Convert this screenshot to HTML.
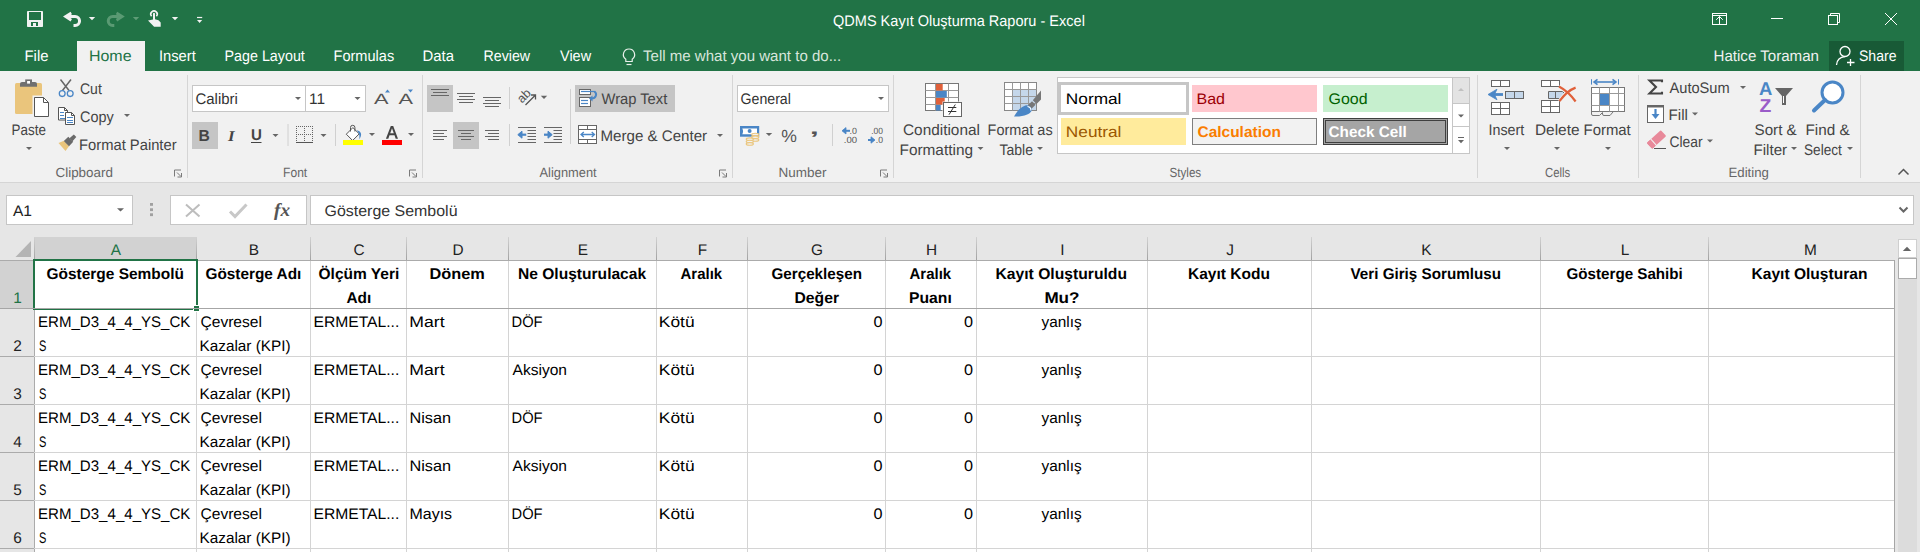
<!DOCTYPE html>
<html><head><meta charset="utf-8"><style>
html,body{margin:0;padding:0;background:#fff;overflow:hidden}
svg{display:block}
text{font-family:"Liberation Sans", sans-serif;text-rendering:geometricPrecision}
</style></head><body>
<svg width="1920" height="552" viewBox="0 0 1920 552" shape-rendering="auto">
<rect x="0" y="0" width="1920" height="71" fill="#217346"/>
<rect x="27" y="11" width="16" height="16" fill="#F2F2F2" rx="0.8"/>
<rect x="29" y="12" width="12" height="8" fill="#217346"/>
<rect x="31" y="22" width="7" height="4" fill="#217346"/>
<rect x="33" y="23" width="3" height="3" fill="#F2F2F2"/>
<path d="M66 16.6H75.1A4.4 4.4 0 0 1 75.1 25.5H73.5" fill="none" stroke="#F2F2F2" stroke-width="3"/>
<path d="M63 16.6L70.6 11.8L72 14.2L68.2 16.6L72 19L70.6 21.4Z" fill="#F2F2F2"/>
<path d="M88.8 17h6.4l-3.2 3.3z" fill="#F2F2F2"/>
<path d="M121.8 16.6H112.7A4.4 4.4 0 0 0 112.7 25.5H114.3" fill="none" stroke="#5A9A73" stroke-width="3"/>
<path d="M124.8 16.6L117.2 11.8L115.8 14.2L119.6 16.6L115.8 19L117.2 21.4Z" fill="#5A9A73"/>
<path d="M132.8 17h6.4l-3.2 3.3z" fill="#5E9C76"/>
<path d="M151.6 16.3A3.2 3.2 0 1 1 156.4 16.3" fill="none" stroke="#F2F2F2" stroke-width="1.6"/>
<path d="M148 20.6L153 19.6V13.8A1 1 0 0 1 155 13.8V19.2L158.5 20.2L160.7 22.6V26.7H154.1Z" fill="#F2F2F2"/>
<path d="M171.8 17h6.4l-3.2 3.3z" fill="#F2F2F2"/>
<rect x="197" y="16.9" width="5.2" height="1.2" fill="#F2F2F2"/>
<path d="M197.0 19.9h5.2l-2.6 3.1z" fill="#F2F2F2"/>
<text x="833.00" y="26.0" font-size="15.3" fill="#FFFFFF" textLength="251.88" lengthAdjust="spacingAndGlyphs">QDMS Kayıt Oluşturma Raporu - Excel</text>
<rect x="1712.5" y="13.5" width="14" height="11" fill="none" stroke="#fff" stroke-width="1"/>
<line x1="1712.5" y1="15.5" x2="1726.5" y2="15.5" stroke="#fff" stroke-width="1"/>
<path d="M1719.5 24V16.5M1716.2 19.8L1719.5 16.5L1722.8 19.8" fill="none" stroke="#fff" stroke-width="1"/>
<line x1="1771" y1="18.5" x2="1783" y2="18.5" stroke="#fff" stroke-width="1"/>
<rect x="1828.5" y="15.5" width="9" height="9" fill="none" stroke="#fff" stroke-width="1"/>
<path d="M1830.5 15.5v-2h9v9h-2" fill="none" stroke="#fff" stroke-width="1"/>
<path d="M1885 13l12 12M1897 13l-12 12" fill="none" stroke="#fff" stroke-width="1"/>
<rect x="77" y="41" width="68" height="30" fill="#F1F1F1"/>
<text x="24.53" y="61.0" font-size="15.3" fill="#FFFFFF" textLength="23.97" lengthAdjust="spacingAndGlyphs">File</text>
<text x="88.96" y="61.0" font-size="15.3" fill="#217346" textLength="42.57" lengthAdjust="spacingAndGlyphs">Home</text>
<text x="159.04" y="61.0" font-size="15.3" fill="#FFFFFF" textLength="36.74" lengthAdjust="spacingAndGlyphs">Insert</text>
<text x="224.57" y="61.0" font-size="15.3" fill="#FFFFFF" textLength="80.23" lengthAdjust="spacingAndGlyphs">Page Layout</text>
<text x="333.55" y="61.0" font-size="15.3" fill="#FFFFFF" textLength="60.62" lengthAdjust="spacingAndGlyphs">Formulas</text>
<text x="422.53" y="61.0" font-size="15.3" fill="#FFFFFF" textLength="31.49" lengthAdjust="spacingAndGlyphs">Data</text>
<text x="483.57" y="61.0" font-size="15.3" fill="#FFFFFF" textLength="46.54" lengthAdjust="spacingAndGlyphs">Review</text>
<text x="560.00" y="61.0" font-size="15.3" fill="#FFFFFF" textLength="31.10" lengthAdjust="spacingAndGlyphs">View</text>
<path d="M629 49a5.6 5.6 0 0 0-3.2 10.2v2.3h6.4v-2.3a5.6 5.6 0 0 0-3.2-10.2z" fill="none" stroke="#E8F0EA" stroke-width="1.2"/>
<line x1="626.5" y1="64.5" x2="631.5" y2="64.5" stroke="#E8F0EA" stroke-width="1.2"/>
<text x="643.00" y="61.0" font-size="15.3" fill="#D8E6DC" textLength="198.23" lengthAdjust="spacingAndGlyphs">Tell me what you want to do...</text>
<text x="1713.52" y="61.0" font-size="15.3" fill="#F0F0F0" textLength="105.48" lengthAdjust="spacingAndGlyphs">Hatice Toraman</text>
<rect x="1829" y="41" width="75" height="30" fill="#185A36"/>
<circle cx="1845" cy="51.5" r="5" fill="none" stroke="#fff" stroke-width="1.3"/>
<path d="M1836.5 65c0.5-5 3.5-8 8.5-8.3" fill="none" stroke="#fff" stroke-width="1.3"/>
<path d="M1850.5 59v7M1847 62.5h7.5" fill="none" stroke="#fff" stroke-width="1.3"/>
<text x="1859.00" y="61.0" font-size="15.3" fill="#FFFFFF" textLength="37.47" lengthAdjust="spacingAndGlyphs">Share</text>
<rect x="0" y="71" width="1920" height="111" fill="#F1F1F1"/>
<line x1="0" y1="182.5" x2="1920" y2="182.5" stroke="#D5D5D5" stroke-width="1"/>
<line x1="187.5" y1="75" x2="187.5" y2="178" stroke="#D5D5D5" stroke-width="1"/>
<line x1="422.5" y1="75" x2="422.5" y2="178" stroke="#D5D5D5" stroke-width="1"/>
<line x1="732.5" y1="75" x2="732.5" y2="178" stroke="#D5D5D5" stroke-width="1"/>
<line x1="893.5" y1="75" x2="893.5" y2="178" stroke="#D5D5D5" stroke-width="1"/>
<line x1="1477.5" y1="75" x2="1477.5" y2="178" stroke="#D5D5D5" stroke-width="1"/>
<line x1="1638.5" y1="75" x2="1638.5" y2="178" stroke="#D5D5D5" stroke-width="1"/>
<line x1="1860.5" y1="75" x2="1860.5" y2="178" stroke="#D5D5D5" stroke-width="1"/>
<text x="55.50" y="177.0" font-size="13.3" fill="#666666" textLength="57.40" lengthAdjust="spacingAndGlyphs">Clipboard</text>
<text x="283.09" y="177.0" font-size="13.3" fill="#666666" textLength="24.13" lengthAdjust="spacingAndGlyphs">Font</text>
<text x="539.50" y="177.0" font-size="13.3" fill="#666666" textLength="57.20" lengthAdjust="spacingAndGlyphs">Alignment</text>
<text x="778.49" y="177.0" font-size="13.3" fill="#666666" textLength="47.93" lengthAdjust="spacingAndGlyphs">Number</text>
<text x="1169.50" y="177.0" font-size="13.3" fill="#666666" textLength="31.69" lengthAdjust="spacingAndGlyphs">Styles</text>
<text x="1545.00" y="177.0" font-size="13.3" fill="#666666" textLength="25.20" lengthAdjust="spacingAndGlyphs">Cells</text>
<text x="1728.51" y="177.0" font-size="13.3" fill="#666666" textLength="40.39" lengthAdjust="spacingAndGlyphs">Editing</text>
<path d="M174.5 176.5v-6.5h6.5" fill="none" stroke="#7A7A7A" stroke-width="1"/>
<path d="M177 172.5l4 4M181.5 173.0v4h-4" fill="none" stroke="#7A7A7A" stroke-width="1"/>
<path d="M409.5 176.5v-6.5h6.5" fill="none" stroke="#7A7A7A" stroke-width="1"/>
<path d="M412 172.5l4 4M416.5 173.0v4h-4" fill="none" stroke="#7A7A7A" stroke-width="1"/>
<path d="M719.5 176.5v-6.5h6.5" fill="none" stroke="#7A7A7A" stroke-width="1"/>
<path d="M722 172.5l4 4M726.5 173.0v4h-4" fill="none" stroke="#7A7A7A" stroke-width="1"/>
<path d="M880.5 176.5v-6.5h6.5" fill="none" stroke="#7A7A7A" stroke-width="1"/>
<path d="M883 172.5l4 4M887.5 173.0v4h-4" fill="none" stroke="#7A7A7A" stroke-width="1"/>
<path d="M1898.5 174.5l5-5l5 5" fill="none" stroke="#555" stroke-width="1.5"/>
<rect x="15" y="83" width="27" height="31" fill="#EAC57C" rx="1.5"/>
<path d="M20 86.8V84a2 2 0 0 1 2-2H35a2 2 0 0 1 2 2V86.8Z" fill="#707070"/>
<rect x="25.2" y="79.4" width="6.8" height="3" fill="#707070"/>
<rect x="27.1" y="81" width="2.9" height="2.6" fill="#FFFFFF"/>
<path d="M33.5 96.5h10.5l5 5V116.5H33.5Z" fill="none" stroke="#F1F1F1" stroke-width="2"/>
<path d="M34.5 97.5h9l5 5v14h-14z" fill="#fff" stroke="#555" stroke-width="1"/>
<path d="M43.5 97.5v5h5" fill="none" stroke="#555" stroke-width="1"/>
<text x="11.62" y="134.8" font-size="15.3" fill="#444444" textLength="34.32" lengthAdjust="spacingAndGlyphs">Paste</text>
<path d="M26.0 147h6l-3.0 3z" fill="#666"/>
<path d="M60.5 79.5L69 90.5M71 79.5L62.5 90.5" fill="none" stroke="#666" stroke-width="1.5"/>
<circle cx="62.2" cy="93.6" r="2.9" fill="none" stroke="#4A86C6" stroke-width="1.3"/>
<circle cx="70.2" cy="93.6" r="2.9" fill="none" stroke="#4A86C6" stroke-width="1.3"/>
<text x="80.00" y="94.2" font-size="15.3" fill="#444444" textLength="21.81" lengthAdjust="spacingAndGlyphs">Cut</text>
<path d="M58.5 107.5h6l3 3v9.5h-9z" fill="#fff" stroke="#555" stroke-width="1"/>
<path d="M64.5 107.5v3h3" fill="none" stroke="#555" stroke-width="1"/>
<path d="M65.5 112.5h6l3 3v9h-9z" fill="#fff" stroke="#555" stroke-width="1"/>
<path d="M71.5 112.5v3h3" fill="none" stroke="#555" stroke-width="1"/>
<line x1="60" y1="112.5" x2="64" y2="112.5" stroke="#4A86C6" stroke-width="1"/>
<line x1="60" y1="115.5" x2="64" y2="115.5" stroke="#4A86C6" stroke-width="1"/>
<line x1="60" y1="118.5" x2="65" y2="118.5" stroke="#4A86C6" stroke-width="1"/>
<line x1="67" y1="117.5" x2="73" y2="117.5" stroke="#4A86C6" stroke-width="1"/>
<line x1="67" y1="120.5" x2="73" y2="120.5" stroke="#4A86C6" stroke-width="1"/>
<line x1="67" y1="122.5" x2="73" y2="122.5" stroke="#4A86C6" stroke-width="1"/>
<text x="80.00" y="121.5" font-size="15.3" fill="#444444" textLength="33.67" lengthAdjust="spacingAndGlyphs">Copy</text>
<path d="M124.0 114h6l-3.0 3z" fill="#666"/>
<path d="M58.5 143L64 140.8L69.2 146L65.5 151Z" fill="#EAC57C"/>
<path d="M63.8 141L68.3 136.8L73.2 141.7L69 146.2Z" fill="#6A6A6A"/>
<path d="M69.5 138.2L73.8 134.5L76.3 137L72.5 141.2Z" fill="#6A6A6A"/>
<text x="79.04" y="150.2" font-size="15.3" fill="#444444" textLength="97.55" lengthAdjust="spacingAndGlyphs">Format Painter</text>
<rect x="192.5" y="85.5" width="113" height="26" fill="#fff" stroke="#C6C6C6" stroke-width="1"/>
<rect x="305.5" y="85.5" width="60" height="26" fill="#fff" stroke="#C6C6C6" stroke-width="1"/>
<text x="195.50" y="104.0" font-size="15.3" fill="#333" textLength="42.39" lengthAdjust="spacingAndGlyphs">Calibri</text>
<path d="M295.0 97h6l-3.0 3z" fill="#666"/>
<text x="308.99" y="104.0" font-size="15.3" fill="#333" textLength="16.02" lengthAdjust="spacingAndGlyphs">11</text>
<path d="M354.5 97h6l-3.0 3z" fill="#666"/>
<text x="374.00" y="104.0" font-size="15" fill="#555" textLength="14.51" lengthAdjust="spacingAndGlyphs">A</text>
<path d="M385 92.5l2.5-3l2.5 3z" fill="#4A86C6"/>
<text x="398.50" y="104.0" font-size="15" fill="#555" textLength="14.51" lengthAdjust="spacingAndGlyphs">A</text>
<path d="M408 89.5l2.5 3l2.5-3z" fill="#4A86C6"/>
<rect x="192" y="122" width="26" height="27" fill="#C5C5C5"/>
<text x="198.52" y="140.5" font-size="16" fill="#444" font-weight="bold" textLength="11.32" lengthAdjust="spacingAndGlyphs">B</text>
<text x="228.12" y="140.8" font-size="15" fill="#444" font-weight="bold" style="font-family:'Liberation Serif';font-style:italic" textLength="6.57" lengthAdjust="spacingAndGlyphs">I</text>
<text x="251.00" y="140.3" font-size="15.5" fill="#444" font-weight="bold" textLength="10.89" lengthAdjust="spacingAndGlyphs">U</text>
<line x1="251" y1="142.5" x2="261.5" y2="142.5" stroke="#444" stroke-width="1"/>
<path d="M272.5 134h6l-3.0 3z" fill="#666"/>
<line x1="288" y1="124" x2="288" y2="146" stroke="#D0D0D0" stroke-width="1"/>
<rect x="296" y="126" width="1" height="1" fill="#666"/>
<rect x="296" y="134" width="1" height="1" fill="#666"/>
<rect x="298" y="126" width="1" height="1" fill="#666"/>
<rect x="298" y="134" width="1" height="1" fill="#666"/>
<rect x="300" y="126" width="1" height="1" fill="#666"/>
<rect x="300" y="134" width="1" height="1" fill="#666"/>
<rect x="302" y="126" width="1" height="1" fill="#666"/>
<rect x="302" y="134" width="1" height="1" fill="#666"/>
<rect x="304" y="126" width="1" height="1" fill="#666"/>
<rect x="304" y="134" width="1" height="1" fill="#666"/>
<rect x="306" y="126" width="1" height="1" fill="#666"/>
<rect x="306" y="134" width="1" height="1" fill="#666"/>
<rect x="308" y="126" width="1" height="1" fill="#666"/>
<rect x="308" y="134" width="1" height="1" fill="#666"/>
<rect x="310" y="126" width="1" height="1" fill="#666"/>
<rect x="310" y="134" width="1" height="1" fill="#666"/>
<rect x="312" y="126" width="1" height="1" fill="#666"/>
<rect x="312" y="134" width="1" height="1" fill="#666"/>
<rect x="296" y="126" width="1" height="1" fill="#666"/>
<rect x="304" y="126" width="1" height="1" fill="#666"/>
<rect x="312" y="126" width="1" height="1" fill="#666"/>
<rect x="296" y="128" width="1" height="1" fill="#666"/>
<rect x="304" y="128" width="1" height="1" fill="#666"/>
<rect x="312" y="128" width="1" height="1" fill="#666"/>
<rect x="296" y="130" width="1" height="1" fill="#666"/>
<rect x="304" y="130" width="1" height="1" fill="#666"/>
<rect x="312" y="130" width="1" height="1" fill="#666"/>
<rect x="296" y="132" width="1" height="1" fill="#666"/>
<rect x="304" y="132" width="1" height="1" fill="#666"/>
<rect x="312" y="132" width="1" height="1" fill="#666"/>
<rect x="296" y="134" width="1" height="1" fill="#666"/>
<rect x="304" y="134" width="1" height="1" fill="#666"/>
<rect x="312" y="134" width="1" height="1" fill="#666"/>
<rect x="296" y="136" width="1" height="1" fill="#666"/>
<rect x="304" y="136" width="1" height="1" fill="#666"/>
<rect x="312" y="136" width="1" height="1" fill="#666"/>
<rect x="296" y="138" width="1" height="1" fill="#666"/>
<rect x="304" y="138" width="1" height="1" fill="#666"/>
<rect x="312" y="138" width="1" height="1" fill="#666"/>
<rect x="296" y="140" width="1" height="1" fill="#666"/>
<rect x="304" y="140" width="1" height="1" fill="#666"/>
<rect x="312" y="140" width="1" height="1" fill="#666"/>
<line x1="296" y1="142.5" x2="313" y2="142.5" stroke="#555" stroke-width="1"/>
<path d="M320.5 134h6l-3.0 3z" fill="#666"/>
<line x1="335.5" y1="124" x2="335.5" y2="146" stroke="#D0D0D0" stroke-width="1"/>
<path d="M346.3 134.2L352.9 127.6L359.2 133.9L352.6 140.5Z" fill="#fff" stroke="#555" stroke-width="1"/>
<path d="M350.5 131.5V127.5A2.2 2.2 0 0 1 354.9 127.5V131.5" fill="none" stroke="#555" stroke-width="1"/>
<path d="M356.8 130.2C361 131 362.8 134.5 359.3 139.3C359.6 136 359.5 133.5 357.8 131.8Z" fill="#4A86C6"/>
<rect x="343" y="140" width="20" height="5" fill="#FFFF00"/>
<path d="M369.0 133h6l-3.0 3z" fill="#666"/>
<path d="M385.9 138.75L390.8 126H393.2L398 138.75H395.7L394.5 135.3H389.5L388.3 138.75ZM390.2 133.3H393.8L392 128.3Z" fill="#444" fill-rule="evenodd"/>
<rect x="382" y="140" width="20" height="5" fill="#FF0000"/>
<path d="M408.0 133h6l-3.0 3z" fill="#666"/>
<rect x="427" y="85" width="26" height="27" fill="#C5C5C5"/>
<line x1="431" y1="89.5" x2="449" y2="89.5" stroke="#666" stroke-width="1"/>
<line x1="433" y1="92.5" x2="447" y2="92.5" stroke="#666" stroke-width="1"/>
<line x1="431" y1="95.5" x2="449" y2="95.5" stroke="#666" stroke-width="1"/>
<line x1="457" y1="93.5" x2="475" y2="93.5" stroke="#666" stroke-width="1"/>
<line x1="459" y1="96.5" x2="473" y2="96.5" stroke="#666" stroke-width="1"/>
<line x1="457" y1="99.5" x2="475" y2="99.5" stroke="#666" stroke-width="1"/>
<line x1="459" y1="102.5" x2="473" y2="102.5" stroke="#666" stroke-width="1"/>
<line x1="483" y1="97.5" x2="501" y2="97.5" stroke="#666" stroke-width="1"/>
<line x1="485" y1="100.5" x2="499" y2="100.5" stroke="#666" stroke-width="1"/>
<line x1="483" y1="103.5" x2="501" y2="103.5" stroke="#666" stroke-width="1"/>
<line x1="485" y1="106.5" x2="499" y2="106.5" stroke="#666" stroke-width="1"/>
<line x1="509.5" y1="87" x2="509.5" y2="109" stroke="#D0D0D0" stroke-width="1"/>
<text x="517.00" y="100.0" font-size="12.5" fill="#555" textLength="13.95" lengthAdjust="spacingAndGlyphs" transform="rotate(-45 524 96)">ab</text>
<path d="M525.5 105L535.5 95M531 95H535.5V99.5" fill="none" stroke="#555" stroke-width="1.3"/>
<path d="M540.8 95.8h6.4l-3.2 3.2z" fill="#666"/>
<line x1="570.5" y1="89" x2="570.5" y2="144" stroke="#D0D0D0" stroke-width="1"/>
<rect x="575" y="85" width="100" height="27" fill="#C5C5C5"/>
<rect x="579.5" y="89.5" width="11" height="5" fill="#fff" stroke="#666" stroke-width="1"/>
<rect x="579.5" y="97.5" width="11" height="9" fill="#fff" stroke="#666" stroke-width="1"/>
<line x1="581" y1="91.5" x2="595" y2="91.5" stroke="#4A86C6" stroke-width="1.2"/>
<line x1="581" y1="100.5" x2="588" y2="100.5" stroke="#4A86C6" stroke-width="1.2"/>
<line x1="581" y1="103.5" x2="588" y2="103.5" stroke="#4A86C6" stroke-width="1.2"/>
<path d="M594.5 91.5C597.5 94 596 98.5 591.5 98.5" fill="none" stroke="#4A86C6" stroke-width="2"/>
<path d="M589 98.5L592.5 95.5V101.5Z" fill="#4A86C6"/>
<text x="601.50" y="104.0" font-size="15.3" fill="#444444" textLength="65.78" lengthAdjust="spacingAndGlyphs">Wrap Text</text>
<line x1="433" y1="130.5" x2="447" y2="130.5" stroke="#666" stroke-width="1"/>
<line x1="433" y1="133.5" x2="444" y2="133.5" stroke="#666" stroke-width="1"/>
<line x1="433" y1="136.5" x2="447" y2="136.5" stroke="#666" stroke-width="1"/>
<line x1="433" y1="139.5" x2="444" y2="139.5" stroke="#666" stroke-width="1"/>
<rect x="453" y="122" width="26" height="27" fill="#C5C5C5"/>
<line x1="458" y1="130.5" x2="474" y2="130.5" stroke="#666" stroke-width="1"/>
<line x1="461" y1="133.5" x2="471" y2="133.5" stroke="#666" stroke-width="1"/>
<line x1="458" y1="136.5" x2="474" y2="136.5" stroke="#666" stroke-width="1"/>
<line x1="461" y1="139.5" x2="471" y2="139.5" stroke="#666" stroke-width="1"/>
<line x1="485" y1="130.5" x2="499" y2="130.5" stroke="#666" stroke-width="1"/>
<line x1="488" y1="133.5" x2="499" y2="133.5" stroke="#666" stroke-width="1"/>
<line x1="485" y1="136.5" x2="499" y2="136.5" stroke="#666" stroke-width="1"/>
<line x1="488" y1="139.5" x2="499" y2="139.5" stroke="#666" stroke-width="1"/>
<line x1="509.5" y1="124" x2="509.5" y2="146" stroke="#D0D0D0" stroke-width="1"/>
<line x1="518" y1="127.5" x2="536" y2="127.5" stroke="#666" stroke-width="1"/>
<line x1="527.5" y1="130.5" x2="536" y2="130.5" stroke="#666" stroke-width="1"/>
<line x1="527.5" y1="133.5" x2="536" y2="133.5" stroke="#666" stroke-width="1"/>
<line x1="527.5" y1="136.5" x2="536" y2="136.5" stroke="#666" stroke-width="1"/>
<line x1="527.5" y1="139.5" x2="536" y2="139.5" stroke="#666" stroke-width="1"/>
<line x1="518" y1="142.5" x2="536" y2="142.5" stroke="#666" stroke-width="1"/>
<path d="M519 134.7H526.2" fill="none" stroke="#4A86C6" stroke-width="2.2"/>
<path d="M517.8 134.7L522 131.2V138.2Z" fill="#4A86C6" stroke="#4A86C6" stroke-width="1"/>
<line x1="544" y1="127.5" x2="562" y2="127.5" stroke="#666" stroke-width="1"/>
<line x1="553.5" y1="130.5" x2="562" y2="130.5" stroke="#666" stroke-width="1"/>
<line x1="553.5" y1="133.5" x2="562" y2="133.5" stroke="#666" stroke-width="1"/>
<line x1="553.5" y1="136.5" x2="562" y2="136.5" stroke="#666" stroke-width="1"/>
<line x1="553.5" y1="139.5" x2="562" y2="139.5" stroke="#666" stroke-width="1"/>
<line x1="544" y1="142.5" x2="562" y2="142.5" stroke="#666" stroke-width="1"/>
<path d="M544 134.7H551" fill="none" stroke="#4A86C6" stroke-width="2.2"/>
<path d="M552.2 134.7L548 131.2V138.2Z" fill="#4A86C6" stroke="#4A86C6" stroke-width="1"/>
<rect x="578.5" y="125.5" width="18" height="18" fill="#fff" stroke="#666" stroke-width="1"/>
<line x1="578.5" y1="129.5" x2="596.5" y2="129.5" stroke="#666" stroke-width="1"/>
<line x1="578.5" y1="139.5" x2="596.5" y2="139.5" stroke="#666" stroke-width="1"/>
<line x1="587.5" y1="125.5" x2="587.5" y2="129.5" stroke="#666" stroke-width="1"/>
<line x1="587.5" y1="139.5" x2="587.5" y2="143.5" stroke="#666" stroke-width="1"/>
<path d="M581 134.5H594.5M583.8 132L581 134.5L583.8 137M591.7 132L594.5 134.5L591.7 137" fill="none" stroke="#4A86C6" stroke-width="1.3"/>
<text x="600.51" y="141.0" font-size="15.3" fill="#444444" textLength="106.58" lengthAdjust="spacingAndGlyphs">Merge &amp; Center</text>
<path d="M717.0 134h6l-3.0 3z" fill="#666"/>
<rect x="737.5" y="85.5" width="151" height="26" fill="#fff" stroke="#C6C6C6" stroke-width="1"/>
<text x="740.50" y="104.0" font-size="15.3" fill="#333" textLength="50.37" lengthAdjust="spacingAndGlyphs">General</text>
<path d="M878.0 97h6l-3.0 3z" fill="#666"/>
<rect x="740" y="126" width="19.2" height="10.7" fill="#4A86C6"/>
<path d="M742.3 128.6H757V134.3H742.3C743.3 132.5 743.3 130.4 742.3 128.6Z" fill="#fff"/>
<circle cx="749.6" cy="131" r="2" fill="#4A86C6"/>
<ellipse cx="755.2" cy="134.5" rx="3.6" ry="1.3" fill="#F1F1F1" stroke="#EAC57C" stroke-width="1.1"/>
<ellipse cx="755.2" cy="137.2" rx="3.6" ry="1.3" fill="#F1F1F1" stroke="#EAC57C" stroke-width="1.1"/>
<ellipse cx="755.2" cy="139.9" rx="3.6" ry="1.3" fill="#F1F1F1" stroke="#EAC57C" stroke-width="1.1"/>
<ellipse cx="749.8" cy="139.2" rx="3.6" ry="1.3" fill="#F1F1F1" stroke="#EAC57C" stroke-width="1.1"/>
<ellipse cx="749.8" cy="141.6" rx="3.6" ry="1.3" fill="#F1F1F1" stroke="#EAC57C" stroke-width="1.1"/>
<ellipse cx="749.8" cy="143.9" rx="3.6" ry="1.3" fill="#F1F1F1" stroke="#EAC57C" stroke-width="1.1"/>
<path d="M765.8 133h6.4l-3.2 3z" fill="#666"/>
<text x="781.20" y="142.0" font-size="17.5" fill="#555" textLength="15.66" lengthAdjust="spacingAndGlyphs">%</text>
<text x="809.77" y="133.5" font-size="17" fill="#555" font-weight="bold" textLength="9.13" lengthAdjust="spacingAndGlyphs">,</text>
<line x1="832.5" y1="124" x2="832.5" y2="146" stroke="#D0D0D0" stroke-width="1"/>
<path d="M843.5 130.8H850" fill="none" stroke="#4A86C6" stroke-width="2"/>
<path d="M842 130.8L846 127.6V134Z" fill="#4A86C6" stroke="#4A86C6" stroke-width="0.8"/>
<text x="849.60" y="133.8" font-size="9" fill="#555" textLength="7.41" lengthAdjust="spacingAndGlyphs">.0</text>
<text x="843.75" y="142.5" font-size="9" fill="#555" textLength="13.26" lengthAdjust="spacingAndGlyphs">.00</text>
<text x="871.25" y="133.8" font-size="9" fill="#555" textLength="11.76" lengthAdjust="spacingAndGlyphs">.00</text>
<path d="M868 140H873.5" fill="none" stroke="#4A86C6" stroke-width="2"/>
<path d="M875 140L871 136.8V143.2Z" fill="#4A86C6" stroke="#4A86C6" stroke-width="0.8"/>
<text x="875.80" y="142.5" font-size="9" fill="#555" textLength="7.21" lengthAdjust="spacingAndGlyphs">.0</text>
<rect x="925.5" y="83.5" width="33" height="27" fill="#fff" stroke="#777" stroke-width="1"/>
<line x1="935.5" y1="83.5" x2="935.5" y2="110.5" stroke="#999" stroke-width="1"/>
<line x1="948.5" y1="83.5" x2="948.5" y2="110.5" stroke="#999" stroke-width="1"/>
<line x1="925.5" y1="90.5" x2="958.5" y2="90.5" stroke="#999" stroke-width="1"/>
<line x1="925.5" y1="97.5" x2="958.5" y2="97.5" stroke="#999" stroke-width="1"/>
<line x1="925.5" y1="104.5" x2="958.5" y2="104.5" stroke="#999" stroke-width="1"/>
<rect x="936" y="84" width="6.7" height="6.5" fill="#E0603A"/>
<rect x="936" y="91" width="10.8" height="6.5" fill="#4A86C6"/>
<rect x="936" y="98" width="8.7" height="6.5" fill="#E0603A"/>
<rect x="936" y="105" width="4.7" height="5.5" fill="#4A86C6"/>
<rect x="942.5" y="101.5" width="20" height="16" fill="#F1F1F1"/>
<rect x="943.5" y="102.5" width="18" height="14" fill="#fff" stroke="#666" stroke-width="1"/>
<path d="M948 107.5H956.3M948 111.5H956.3M955.3 104.5L949 114.7" fill="none" stroke="#333" stroke-width="1"/>
<text x="903.00" y="134.8" font-size="15.3" fill="#444444" textLength="76.90" lengthAdjust="spacingAndGlyphs">Conditional</text>
<text x="899.49" y="155.0" font-size="15.3" fill="#444444" textLength="73.52" lengthAdjust="spacingAndGlyphs">Formatting</text>
<path d="M977.5 147h6l-3.0 3z" fill="#666"/>
<rect x="1004.5" y="82.5" width="32" height="28" fill="#fff" stroke="#888" stroke-width="1"/>
<rect x="1012" y="90" width="24" height="20" fill="#C5D7EA"/>
<line x1="1012.5" y1="82.5" x2="1012.5" y2="110.5" stroke="#999" stroke-width="1"/>
<line x1="1020.5" y1="82.5" x2="1020.5" y2="110.5" stroke="#999" stroke-width="1"/>
<line x1="1028.5" y1="82.5" x2="1028.5" y2="110.5" stroke="#999" stroke-width="1"/>
<line x1="1004.5" y1="89.5" x2="1036.5" y2="89.5" stroke="#999" stroke-width="1"/>
<line x1="1004.5" y1="96.5" x2="1036.5" y2="96.5" stroke="#999" stroke-width="1"/>
<line x1="1004.5" y1="103.5" x2="1036.5" y2="103.5" stroke="#999" stroke-width="1"/>
<path d="M1041 90.5V99.5L1036.5 104L1032.8 100.3Z" fill="#777"/>
<path d="M1032 101.2L1035.6 104.8L1031.5 108.8L1028 105.2Z" fill="#777"/>
<path d="M1014 116.6C1017 111 1021.5 106 1026.8 105.3C1030 105.5 1032 107.5 1031.8 110.5C1030 114.5 1024 116.6 1014 116.6Z" fill="#4A86C6"/>
<path d="M1027.5 106.5C1030 106.8 1031.2 108.5 1030.8 110.5" fill="none" stroke="#fff" stroke-width="1.2"/>
<text x="987.55" y="134.8" font-size="15.3" fill="#444444" textLength="65.11" lengthAdjust="spacingAndGlyphs">Format as</text>
<text x="999.50" y="155.0" font-size="15.3" fill="#444444" textLength="33.46" lengthAdjust="spacingAndGlyphs">Table</text>
<path d="M1037.0 147h6l-3.0 3z" fill="#666"/>
<rect x="1057.5" y="77.5" width="412" height="76" fill="#FFFFFF" stroke="#C6C6C6" stroke-width="1"/>
<rect x="1059.5" y="83.5" width="128" height="30" fill="#fff" stroke="#C6C6C6" stroke-width="3"/>
<text x="1065.87" y="104.0" font-size="15.3" fill="#000" textLength="55.58" lengthAdjust="spacingAndGlyphs">Normal</text>
<rect x="1192" y="85" width="125" height="27" fill="#FFC7CE"/>
<text x="1196.45" y="104.0" font-size="15.3" fill="#9C0006" textLength="28.58" lengthAdjust="spacingAndGlyphs">Bad</text>
<rect x="1323" y="85" width="125" height="27" fill="#C6EFCE"/>
<text x="1328.50" y="104.0" font-size="15.3" fill="#006100" textLength="39.03" lengthAdjust="spacingAndGlyphs">Good</text>
<rect x="1061" y="118" width="125" height="27" fill="#FFEB9C"/>
<text x="1065.87" y="137.0" font-size="15.3" fill="#9C5700" textLength="55.58" lengthAdjust="spacingAndGlyphs">Neutral</text>
<rect x="1192.5" y="118.5" width="124" height="26" fill="#F2F2F2" stroke="#7F7F7F" stroke-width="1"/>
<text x="1197.50" y="137.0" font-size="15.3" fill="#FA7D00" font-weight="bold" textLength="83.35" lengthAdjust="spacingAndGlyphs">Calculation</text>
<rect x="1323.5" y="118.5" width="124" height="26" fill="#A5A5A5" stroke="#3F3F3F" stroke-width="1"/>
<rect x="1325.5" y="120.5" width="120" height="22" fill="none" stroke="#3F3F3F" stroke-width="1"/>
<text x="1328.50" y="137.0" font-size="15.3" fill="#FFFFFF" font-weight="bold">Check Cell</text>
<rect x="1452.5" y="77.5" width="17" height="26" fill="#E3E3E3" stroke="#C6C6C6" stroke-width="1"/>
<rect x="1452.5" y="103.5" width="17" height="23" fill="#FFFFFF" stroke="#C6C6C6" stroke-width="1"/>
<rect x="1452.5" y="126.5" width="17" height="27" fill="#FFFFFF" stroke="#C6C6C6" stroke-width="1"/>
<path d="M1458 91l3-3l3 3z" fill="#C0C0C0"/>
<path d="M1458.0 114.5h6l-3.0 3z" fill="#666"/>
<line x1="1458" y1="137.5" x2="1464" y2="137.5" stroke="#666" stroke-width="1"/>
<path d="M1458.0 140h6l-3.0 3.2z" fill="#666"/>
<rect x="1491.5" y="80.5" width="9" height="6" fill="#fff" stroke="#666" stroke-width="1"/>
<rect x="1500.5" y="80.5" width="9" height="6" fill="#fff" stroke="#666" stroke-width="1"/>
<rect x="1505.5" y="91.5" width="9" height="7" fill="#C5D7EA" stroke="#666" stroke-width="1"/>
<rect x="1514.5" y="91.5" width="9" height="7" fill="#C5D7EA" stroke="#666" stroke-width="1"/>
<path d="M1503 94.5H1494" fill="none" stroke="#4A86C6" stroke-width="2.8"/>
<path d="M1488 94.5L1497 89.2L1494.5 94.5L1497 99.8Z" fill="#4A86C6" stroke="#4A86C6" stroke-width="0.8" stroke-linejoin="round"/>
<rect x="1491.5" y="102.5" width="9" height="6" fill="#fff" stroke="#666" stroke-width="1"/>
<rect x="1500.5" y="102.5" width="9" height="6" fill="#fff" stroke="#666" stroke-width="1"/>
<rect x="1491.5" y="108.5" width="9" height="6" fill="#fff" stroke="#666" stroke-width="1"/>
<rect x="1500.5" y="108.5" width="9" height="6" fill="#fff" stroke="#666" stroke-width="1"/>
<text x="1488.57" y="134.8" font-size="15.3" fill="#444444" textLength="35.73" lengthAdjust="spacingAndGlyphs">Insert</text>
<path d="M1504.0 147h6l-3.0 3z" fill="#666"/>
<rect x="1541.5" y="80.5" width="9" height="6" fill="#fff" stroke="#666" stroke-width="1"/>
<rect x="1550.5" y="80.5" width="9" height="6" fill="#fff" stroke="#666" stroke-width="1"/>
<path d="M1548.5 91.5H1562.5L1566 95L1562.5 98.5H1548.5Z" fill="#C5D7EA" stroke="#666" stroke-width="1"/>
<line x1="1555.5" y1="91.5" x2="1555.5" y2="98.5" stroke="#666" stroke-width="1"/>
<rect x="1541.5" y="100.5" width="9" height="6" fill="#fff" stroke="#666" stroke-width="1"/>
<rect x="1550.5" y="100.5" width="9" height="6" fill="#fff" stroke="#666" stroke-width="1"/>
<rect x="1541.5" y="106.5" width="9" height="6" fill="#fff" stroke="#666" stroke-width="1"/>
<rect x="1550.5" y="106.5" width="9" height="6" fill="#fff" stroke="#666" stroke-width="1"/>
<path d="M1559.5 101.2C1564 95 1569 90 1575.6 87.6M1559 86.4C1564 89 1571 95 1575.6 101.5" fill="none" stroke="#F1F1F1" stroke-width="4"/>
<path d="M1559.5 101.2C1564 95 1569 90 1575.6 87.6M1559 86.4C1564 89 1571 95 1575.6 101.5" fill="none" stroke="#E0603A" stroke-width="2.2"/>
<text x="1534.99" y="134.8" font-size="15.3" fill="#444444" textLength="44.52" lengthAdjust="spacingAndGlyphs">Delete</text>
<path d="M1554.0 147h6l-3.0 3z" fill="#666"/>
<path d="M1594.5 82H1615.5" fill="none" stroke="#4A86C6" stroke-width="1.6"/>
<path d="M1597.5 79.3L1594 82L1597.5 84.7M1612.5 79.3L1616 82L1612.5 84.7" fill="none" stroke="#4A86C6" stroke-width="1.6"/>
<line x1="1591.5" y1="79.2" x2="1591.5" y2="84.6" stroke="#4A86C6" stroke-width="1"/>
<line x1="1618.5" y1="79.2" x2="1618.5" y2="84.6" stroke="#4A86C6" stroke-width="1"/>
<rect x="1591.5" y="87.5" width="33" height="24" fill="#fff" stroke="#777" stroke-width="1"/>
<line x1="1599.5" y1="87.5" x2="1599.5" y2="111.5" stroke="#999" stroke-width="1"/>
<line x1="1609.5" y1="87.5" x2="1609.5" y2="111.5" stroke="#999" stroke-width="1"/>
<line x1="1618.5" y1="87.5" x2="1618.5" y2="111.5" stroke="#999" stroke-width="1"/>
<line x1="1591.5" y1="93.5" x2="1624.5" y2="93.5" stroke="#999" stroke-width="1"/>
<line x1="1591.5" y1="105.5" x2="1624.5" y2="105.5" stroke="#999" stroke-width="1"/>
<rect x="1600" y="94" width="9" height="11" fill="#4A86C6"/>
<path d="M1591.5 111.5V114a1.5 1.5 0 0 0 1.5 1.5H1599.5L1602.5 112.5M1602.5 112.5V114a1.5 1.5 0 0 0 1.5 1.5H1610L1613 112" fill="none" stroke="#777" stroke-width="1"/>
<text x="1583.52" y="134.8" font-size="15.3" fill="#444444" textLength="47.24" lengthAdjust="spacingAndGlyphs">Format</text>
<path d="M1605.0 147h6l-3.0 3z" fill="#666"/>
<path d="M1662 82.2V80.5H1649.5L1656 87L1649.5 93.5H1662V91.8" fill="none" stroke="#444" stroke-width="2.1" stroke-linejoin="miter"/>
<text x="1669.50" y="93.2" font-size="15.3" fill="#444444" textLength="60.21" lengthAdjust="spacingAndGlyphs">AutoSum</text>
<path d="M1740.0 86h6l-3.0 3z" fill="#666"/>
<rect x="1647.5" y="105.5" width="16" height="17" fill="#fff" stroke="#666" stroke-width="1"/>
<line x1="1647.5" y1="106.5" x2="1663.5" y2="106.5" stroke="#666" stroke-width="2"/>
<path d="M1655.5 109v6" fill="none" stroke="#4A86C6" stroke-width="2.2"/>
<path d="M1651.5 114H1659.5L1655.5 119Z" fill="#4A86C6"/>
<text x="1668.51" y="119.5" font-size="15.3" fill="#444444" textLength="19.39" lengthAdjust="spacingAndGlyphs">Fill</text>
<path d="M1692.0 112.5h6l-3.0 3z" fill="#666"/>
<g transform="rotate(-42 1656.5 139.5)"><rect x="1647" y="135.5" width="19" height="8" rx="1" fill="#E8899A"/><rect x="1647" y="135.5" width="5" height="8" rx="1" fill="#E8899A"/><line x1="1652.5" y1="135.5" x2="1652.5" y2="143.5" stroke="#F1F1F1" stroke-width="1"/></g>
<line x1="1654" y1="148.5" x2="1666" y2="148.5" stroke="#555" stroke-width="1"/>
<text x="1669.50" y="146.5" font-size="15.3" fill="#444444" textLength="33.09" lengthAdjust="spacingAndGlyphs">Clear</text>
<path d="M1707.0 139.5h6l-3.0 3z" fill="#666"/>
<text x="1759.00" y="95.0" font-size="18.5" fill="#4A86C6" font-weight="bold" textLength="13.36" lengthAdjust="spacingAndGlyphs">A</text>
<text x="1759.50" y="112.0" font-size="18.5" fill="#9A5CC8" font-weight="bold" textLength="11.81" lengthAdjust="spacingAndGlyphs">Z</text>
<path d="M1775 88h18l-7 8v9h-4v-9z" fill="#666"/>
<path d="M1783.5 96v7" fill="none" stroke="#fff" stroke-width="1"/>
<text x="1754.50" y="134.8" font-size="15.3" fill="#444444" textLength="42.20" lengthAdjust="spacingAndGlyphs">Sort &amp;</text>
<text x="1753.51" y="155.0" font-size="15.3" fill="#444444" textLength="33.58" lengthAdjust="spacingAndGlyphs">Filter</text>
<path d="M1791.0 147h6l-3.0 3z" fill="#666"/>
<circle cx="1832.5" cy="92.5" r="10.5" fill="#fff" stroke="#4A86C6" stroke-width="3"/>
<path d="M1825 100l-11 10.5" fill="none" stroke="#4A86C6" stroke-width="4" stroke-linecap="round"/>
<text x="1805.50" y="134.8" font-size="15.3" fill="#444444" textLength="44.20" lengthAdjust="spacingAndGlyphs">Find &amp;</text>
<text x="1804.00" y="155.0" font-size="15.3" fill="#444444" textLength="37.83" lengthAdjust="spacingAndGlyphs">Select</text>
<path d="M1847.0 147h6l-3.0 3z" fill="#666"/>
<rect x="0" y="183" width="1920" height="54" fill="#E6E6E6"/>
<rect x="6.5" y="195.5" width="126" height="29" fill="#fff" stroke="#C6C6C6" stroke-width="1"/>
<text x="13.00" y="216.0" font-size="15.3" fill="#222" textLength="19.02" lengthAdjust="spacingAndGlyphs">A1</text>
<path d="M117.0 208.2h7l-3.5 3.4z" fill="#666"/>
<rect x="150" y="203" width="3" height="2.8" fill="#A0A0A0"/>
<rect x="150" y="208.3" width="3" height="2.8" fill="#A0A0A0"/>
<rect x="150" y="213.3" width="3" height="2.8" fill="#A0A0A0"/>
<rect x="170.5" y="195.5" width="136" height="29" fill="#fff" stroke="#C6C6C6" stroke-width="1"/>
<path d="M186 204.5L199.5 216.5M199.5 204.5L186 216.5" fill="none" stroke="#BDBDBD" stroke-width="2"/>
<path d="M230 211.5L235 216.5L246.5 204.5" fill="none" stroke="#C8C8C8" stroke-width="3"/>
<text x="274.00" y="215.6" font-size="18.5" fill="#555555" font-weight="bold" style="font-family:'Liberation Serif';font-style:italic" textLength="16.06" lengthAdjust="spacingAndGlyphs">fx</text>
<rect x="310.5" y="195.5" width="1603" height="29" fill="#fff" stroke="#C6C6C6" stroke-width="1"/>
<text x="324.50" y="216.0" font-size="15.3" fill="#333" textLength="133.03" lengthAdjust="spacingAndGlyphs">Gösterge Sembolü</text>
<path d="M1899.5 207.5l4 4l4-4" fill="none" stroke="#666" stroke-width="2"/>
<rect x="0" y="237" width="1920" height="315" fill="#E6E6E6"/>
<rect x="34" y="261" width="1860" height="291" fill="#FFFFFF"/>
<rect x="35" y="237" width="161" height="23" fill="#D2D2D2"/>
<rect x="0" y="261" width="34" height="47" fill="#D2D2D2"/>
<path d="M31 241V257H15.5Z" fill="#B4B4B4"/>
<defs><linearGradient id="hsep" x1="0" y1="0" x2="0" y2="1"><stop offset="0" stop-color="#D2D2D2"/><stop offset="1" stop-color="#A2A2A2"/></linearGradient></defs>
<rect x="34" y="237" width="1" height="23" fill="url(#hsep)"/>
<rect x="196" y="237" width="1" height="23" fill="url(#hsep)"/>
<rect x="310" y="237" width="1" height="23" fill="url(#hsep)"/>
<rect x="406" y="237" width="1" height="23" fill="url(#hsep)"/>
<rect x="508" y="237" width="1" height="23" fill="url(#hsep)"/>
<rect x="656" y="237" width="1" height="23" fill="url(#hsep)"/>
<rect x="747" y="237" width="1" height="23" fill="url(#hsep)"/>
<rect x="885" y="237" width="1" height="23" fill="url(#hsep)"/>
<rect x="976" y="237" width="1" height="23" fill="url(#hsep)"/>
<rect x="1147" y="237" width="1" height="23" fill="url(#hsep)"/>
<rect x="1311" y="237" width="1" height="23" fill="url(#hsep)"/>
<rect x="1540" y="237" width="1" height="23" fill="url(#hsep)"/>
<rect x="1708" y="237" width="1" height="23" fill="url(#hsep)"/>
<line x1="0" y1="260.5" x2="1895" y2="260.5" stroke="#ABABAB" stroke-width="1"/>
<line x1="34.5" y1="261" x2="34.5" y2="552" stroke="#ABABAB" stroke-width="1"/>
<line x1="0" y1="308.5" x2="34" y2="308.5" stroke="#ABABAB" stroke-width="1"/>
<line x1="0" y1="356.5" x2="34" y2="356.5" stroke="#ABABAB" stroke-width="1"/>
<line x1="0" y1="404.5" x2="34" y2="404.5" stroke="#ABABAB" stroke-width="1"/>
<line x1="0" y1="452.5" x2="34" y2="452.5" stroke="#ABABAB" stroke-width="1"/>
<line x1="0" y1="500.5" x2="34" y2="500.5" stroke="#ABABAB" stroke-width="1"/>
<line x1="0" y1="548.5" x2="34" y2="548.5" stroke="#ABABAB" stroke-width="1"/>
<line x1="196.5" y1="261" x2="196.5" y2="552" stroke="#D4D4D4" stroke-width="1"/>
<line x1="310.5" y1="261" x2="310.5" y2="552" stroke="#D4D4D4" stroke-width="1"/>
<line x1="406.5" y1="261" x2="406.5" y2="552" stroke="#D4D4D4" stroke-width="1"/>
<line x1="508.5" y1="261" x2="508.5" y2="552" stroke="#D4D4D4" stroke-width="1"/>
<line x1="656.5" y1="261" x2="656.5" y2="552" stroke="#D4D4D4" stroke-width="1"/>
<line x1="747.5" y1="261" x2="747.5" y2="552" stroke="#D4D4D4" stroke-width="1"/>
<line x1="885.5" y1="261" x2="885.5" y2="552" stroke="#D4D4D4" stroke-width="1"/>
<line x1="976.5" y1="261" x2="976.5" y2="552" stroke="#D4D4D4" stroke-width="1"/>
<line x1="1147.5" y1="261" x2="1147.5" y2="552" stroke="#D4D4D4" stroke-width="1"/>
<line x1="1311.5" y1="261" x2="1311.5" y2="552" stroke="#D4D4D4" stroke-width="1"/>
<line x1="1540.5" y1="261" x2="1540.5" y2="552" stroke="#D4D4D4" stroke-width="1"/>
<line x1="1708.5" y1="261" x2="1708.5" y2="552" stroke="#D4D4D4" stroke-width="1"/>
<line x1="1894.5" y1="260" x2="1894.5" y2="552" stroke="#A6A6A6" stroke-width="1"/>
<line x1="34" y1="356.5" x2="1894" y2="356.5" stroke="#D4D4D4" stroke-width="1"/>
<line x1="34" y1="404.5" x2="1894" y2="404.5" stroke="#D4D4D4" stroke-width="1"/>
<line x1="34" y1="452.5" x2="1894" y2="452.5" stroke="#D4D4D4" stroke-width="1"/>
<line x1="34" y1="500.5" x2="1894" y2="500.5" stroke="#D4D4D4" stroke-width="1"/>
<line x1="34" y1="548.5" x2="1894" y2="548.5" stroke="#D4D4D4" stroke-width="1"/>
<line x1="34" y1="308.5" x2="1894" y2="308.5" stroke="#A6A6A6" stroke-width="1"/>
<text x="116.0" y="255" font-size="15.4" fill="#217346" text-anchor="middle">A</text>
<text x="254.0" y="255" font-size="15.4" fill="#222" text-anchor="middle">B</text>
<text x="359.0" y="255" font-size="15.4" fill="#222" text-anchor="middle">C</text>
<text x="458.0" y="255" font-size="15.4" fill="#222" text-anchor="middle">D</text>
<text x="583.0" y="255" font-size="15.4" fill="#222" text-anchor="middle">E</text>
<text x="702.5" y="255" font-size="15.4" fill="#222" text-anchor="middle">F</text>
<text x="817.0" y="255" font-size="15.4" fill="#222" text-anchor="middle">G</text>
<text x="931.5" y="255" font-size="15.4" fill="#222" text-anchor="middle">H</text>
<text x="1062.5" y="255" font-size="15.4" fill="#222" text-anchor="middle">I</text>
<text x="1230.0" y="255" font-size="15.4" fill="#222" text-anchor="middle">J</text>
<text x="1426.5" y="255" font-size="15.4" fill="#222" text-anchor="middle">K</text>
<text x="1625.0" y="255" font-size="15.4" fill="#222" text-anchor="middle">L</text>
<text x="1810.5" y="255" font-size="15.4" fill="#222" text-anchor="middle">M</text>
<text x="17.5" y="302.5" font-size="15.4" fill="#217346" text-anchor="middle">1</text>
<text x="17.5" y="350.5" font-size="15.4" fill="#222" text-anchor="middle">2</text>
<text x="17.5" y="398.5" font-size="15.4" fill="#222" text-anchor="middle">3</text>
<text x="17.5" y="446.5" font-size="15.4" fill="#222" text-anchor="middle">4</text>
<text x="17.5" y="494.5" font-size="15.4" fill="#222" text-anchor="middle">5</text>
<text x="17.5" y="542.5" font-size="15.4" fill="#222" text-anchor="middle">6</text>
<text x="46.50" y="279.0" font-size="15.5" fill="#000" font-weight="bold" textLength="137.47" lengthAdjust="spacingAndGlyphs">Gösterge Sembolü</text>
<text x="205.50" y="279.0" font-size="15.5" fill="#000" font-weight="bold" textLength="95.80" lengthAdjust="spacingAndGlyphs">Gösterge Adı</text>
<text x="318.50" y="279.0" font-size="15.5" fill="#000" font-weight="bold" textLength="80.81" lengthAdjust="spacingAndGlyphs">Ölçüm Yeri</text>
<text x="346.50" y="303.0" font-size="15.5" fill="#000" font-weight="bold" textLength="24.80" lengthAdjust="spacingAndGlyphs">Adı</text>
<text x="429.45" y="279.0" font-size="15.5" fill="#000" font-weight="bold" textLength="55.38" lengthAdjust="spacingAndGlyphs">Dönem</text>
<text x="518.00" y="279.0" font-size="15.5" fill="#000" font-weight="bold" textLength="128.12" lengthAdjust="spacingAndGlyphs">Ne Oluşturulacak</text>
<text x="680.50" y="279.0" font-size="15.5" fill="#000" font-weight="bold" textLength="41.63" lengthAdjust="spacingAndGlyphs">Aralık</text>
<text x="771.50" y="279.0" font-size="15.5" fill="#000" font-weight="bold" textLength="90.46" lengthAdjust="spacingAndGlyphs">Gerçekleşen</text>
<text x="794.49" y="303.0" font-size="15.5" fill="#000" font-weight="bold" textLength="44.55" lengthAdjust="spacingAndGlyphs">Değer</text>
<text x="909.50" y="279.0" font-size="15.5" fill="#000" font-weight="bold" textLength="41.63" lengthAdjust="spacingAndGlyphs">Aralık</text>
<text x="908.99" y="303.0" font-size="15.5" fill="#000" font-weight="bold" textLength="42.83" lengthAdjust="spacingAndGlyphs">Puanı</text>
<text x="995.49" y="279.0" font-size="15.5" fill="#000" font-weight="bold" textLength="131.48" lengthAdjust="spacingAndGlyphs">Kayıt Oluşturuldu</text>
<text x="1044.40" y="303.0" font-size="15.5" fill="#000" font-weight="bold" textLength="35.12" lengthAdjust="spacingAndGlyphs">Mu?</text>
<text x="1188.00" y="279.0" font-size="15.5" fill="#000" font-weight="bold" textLength="81.97" lengthAdjust="spacingAndGlyphs">Kayıt Kodu</text>
<text x="1350.50" y="279.0" font-size="15.5" fill="#000" font-weight="bold" textLength="150.46" lengthAdjust="spacingAndGlyphs">Veri Giriş Sorumlusu</text>
<text x="1566.50" y="279.0" font-size="15.5" fill="#000" font-weight="bold" textLength="116.30" lengthAdjust="spacingAndGlyphs">Gösterge Sahibi</text>
<text x="1751.50" y="279.0" font-size="15.5" fill="#000" font-weight="bold" textLength="115.98" lengthAdjust="spacingAndGlyphs">Kayıt Oluşturan</text>
<text x="38.02" y="327.0" font-size="15.3" fill="#000" textLength="152.40" lengthAdjust="spacingAndGlyphs">ERM_D3_4_4_YS_CK</text>
<text x="39.00" y="351.0" font-size="15.3" fill="#000" textLength="7.35" lengthAdjust="spacingAndGlyphs">S</text>
<text x="200.50" y="327.0" font-size="15.3" fill="#000" textLength="61.41" lengthAdjust="spacingAndGlyphs">Çevresel</text>
<text x="199.50" y="351.0" font-size="15.3" fill="#000" textLength="91.10" lengthAdjust="spacingAndGlyphs">Kazalar (KPI)</text>
<text x="313.48" y="327.0" font-size="15.3" fill="#000" textLength="85.80" lengthAdjust="spacingAndGlyphs">ERMETAL...</text>
<text x="409.35" y="327.0" font-size="15.3" fill="#000" textLength="35.29" lengthAdjust="spacingAndGlyphs">Mart</text>
<text x="511.54" y="327.0" font-size="15.3" fill="#000" textLength="30.99" lengthAdjust="spacingAndGlyphs">DÖF</text>
<text x="658.87" y="327.0" font-size="15.3" fill="#000" textLength="35.71" lengthAdjust="spacingAndGlyphs">Kötü</text>
<text x="873.50" y="327.0" font-size="15.3" fill="#000" textLength="9.04" lengthAdjust="spacingAndGlyphs">0</text>
<text x="964.00" y="327.0" font-size="15.3" fill="#000" textLength="9.04" lengthAdjust="spacingAndGlyphs">0</text>
<text x="1041.50" y="327.0" font-size="15.3" fill="#000" textLength="40.15" lengthAdjust="spacingAndGlyphs">yanlış</text>
<text x="38.02" y="375.0" font-size="15.3" fill="#000" textLength="152.40" lengthAdjust="spacingAndGlyphs">ERM_D3_4_4_YS_CK</text>
<text x="39.00" y="399.0" font-size="15.3" fill="#000" textLength="7.35" lengthAdjust="spacingAndGlyphs">S</text>
<text x="200.50" y="375.0" font-size="15.3" fill="#000" textLength="61.41" lengthAdjust="spacingAndGlyphs">Çevresel</text>
<text x="199.50" y="399.0" font-size="15.3" fill="#000" textLength="91.10" lengthAdjust="spacingAndGlyphs">Kazalar (KPI)</text>
<text x="313.48" y="375.0" font-size="15.3" fill="#000" textLength="85.80" lengthAdjust="spacingAndGlyphs">ERMETAL...</text>
<text x="409.35" y="375.0" font-size="15.3" fill="#000" textLength="35.29" lengthAdjust="spacingAndGlyphs">Mart</text>
<text x="512.50" y="375.0" font-size="15.3" fill="#000" textLength="54.52" lengthAdjust="spacingAndGlyphs">Aksiyon</text>
<text x="658.87" y="375.0" font-size="15.3" fill="#000" textLength="35.71" lengthAdjust="spacingAndGlyphs">Kötü</text>
<text x="873.50" y="375.0" font-size="15.3" fill="#000" textLength="9.04" lengthAdjust="spacingAndGlyphs">0</text>
<text x="964.00" y="375.0" font-size="15.3" fill="#000" textLength="9.04" lengthAdjust="spacingAndGlyphs">0</text>
<text x="1041.50" y="375.0" font-size="15.3" fill="#000" textLength="40.15" lengthAdjust="spacingAndGlyphs">yanlış</text>
<text x="38.02" y="423.0" font-size="15.3" fill="#000" textLength="152.40" lengthAdjust="spacingAndGlyphs">ERM_D3_4_4_YS_CK</text>
<text x="39.00" y="447.0" font-size="15.3" fill="#000" textLength="7.35" lengthAdjust="spacingAndGlyphs">S</text>
<text x="200.50" y="423.0" font-size="15.3" fill="#000" textLength="61.41" lengthAdjust="spacingAndGlyphs">Çevresel</text>
<text x="199.50" y="447.0" font-size="15.3" fill="#000" textLength="91.10" lengthAdjust="spacingAndGlyphs">Kazalar (KPI)</text>
<text x="313.48" y="423.0" font-size="15.3" fill="#000" textLength="85.80" lengthAdjust="spacingAndGlyphs">ERMETAL...</text>
<text x="409.44" y="423.0" font-size="15.3" fill="#000" textLength="41.60" lengthAdjust="spacingAndGlyphs">Nisan</text>
<text x="511.54" y="423.0" font-size="15.3" fill="#000" textLength="30.99" lengthAdjust="spacingAndGlyphs">DÖF</text>
<text x="658.87" y="423.0" font-size="15.3" fill="#000" textLength="35.71" lengthAdjust="spacingAndGlyphs">Kötü</text>
<text x="873.50" y="423.0" font-size="15.3" fill="#000" textLength="9.04" lengthAdjust="spacingAndGlyphs">0</text>
<text x="964.00" y="423.0" font-size="15.3" fill="#000" textLength="9.04" lengthAdjust="spacingAndGlyphs">0</text>
<text x="1041.50" y="423.0" font-size="15.3" fill="#000" textLength="40.15" lengthAdjust="spacingAndGlyphs">yanlış</text>
<text x="38.02" y="471.0" font-size="15.3" fill="#000" textLength="152.40" lengthAdjust="spacingAndGlyphs">ERM_D3_4_4_YS_CK</text>
<text x="39.00" y="495.0" font-size="15.3" fill="#000" textLength="7.35" lengthAdjust="spacingAndGlyphs">S</text>
<text x="200.50" y="471.0" font-size="15.3" fill="#000" textLength="61.41" lengthAdjust="spacingAndGlyphs">Çevresel</text>
<text x="199.50" y="495.0" font-size="15.3" fill="#000" textLength="91.10" lengthAdjust="spacingAndGlyphs">Kazalar (KPI)</text>
<text x="313.48" y="471.0" font-size="15.3" fill="#000" textLength="85.80" lengthAdjust="spacingAndGlyphs">ERMETAL...</text>
<text x="409.44" y="471.0" font-size="15.3" fill="#000" textLength="41.60" lengthAdjust="spacingAndGlyphs">Nisan</text>
<text x="512.50" y="471.0" font-size="15.3" fill="#000" textLength="54.52" lengthAdjust="spacingAndGlyphs">Aksiyon</text>
<text x="658.87" y="471.0" font-size="15.3" fill="#000" textLength="35.71" lengthAdjust="spacingAndGlyphs">Kötü</text>
<text x="873.50" y="471.0" font-size="15.3" fill="#000" textLength="9.04" lengthAdjust="spacingAndGlyphs">0</text>
<text x="964.00" y="471.0" font-size="15.3" fill="#000" textLength="9.04" lengthAdjust="spacingAndGlyphs">0</text>
<text x="1041.50" y="471.0" font-size="15.3" fill="#000" textLength="40.15" lengthAdjust="spacingAndGlyphs">yanlış</text>
<text x="38.02" y="519.0" font-size="15.3" fill="#000" textLength="152.40" lengthAdjust="spacingAndGlyphs">ERM_D3_4_4_YS_CK</text>
<text x="39.00" y="543.0" font-size="15.3" fill="#000" textLength="7.35" lengthAdjust="spacingAndGlyphs">S</text>
<text x="200.50" y="519.0" font-size="15.3" fill="#000" textLength="61.41" lengthAdjust="spacingAndGlyphs">Çevresel</text>
<text x="199.50" y="543.0" font-size="15.3" fill="#000" textLength="91.10" lengthAdjust="spacingAndGlyphs">Kazalar (KPI)</text>
<text x="313.48" y="519.0" font-size="15.3" fill="#000" textLength="85.80" lengthAdjust="spacingAndGlyphs">ERMETAL...</text>
<text x="409.45" y="519.0" font-size="15.3" fill="#000" textLength="42.68" lengthAdjust="spacingAndGlyphs">Mayıs</text>
<text x="511.54" y="519.0" font-size="15.3" fill="#000" textLength="30.99" lengthAdjust="spacingAndGlyphs">DÖF</text>
<text x="658.87" y="519.0" font-size="15.3" fill="#000" textLength="35.71" lengthAdjust="spacingAndGlyphs">Kötü</text>
<text x="873.50" y="519.0" font-size="15.3" fill="#000" textLength="9.04" lengthAdjust="spacingAndGlyphs">0</text>
<text x="964.00" y="519.0" font-size="15.3" fill="#000" textLength="9.04" lengthAdjust="spacingAndGlyphs">0</text>
<text x="1041.50" y="519.0" font-size="15.3" fill="#000" textLength="40.15" lengthAdjust="spacingAndGlyphs">yanlış</text>
<rect x="34" y="260" width="163" height="49" fill="none" stroke="#217346" stroke-width="2"/>
<rect x="193" y="305" width="7" height="7" fill="#fff"/>
<rect x="194" y="306" width="5" height="5" fill="#217346"/>
<line x1="0" y1="308.5" x2="1894" y2="308.5" stroke="#A6A6A6" stroke-width="1"/>
<rect x="1896" y="237" width="24" height="315" fill="#E6E6E6"/>
<rect x="1898" y="279" width="19" height="273" fill="#DCDCDC"/>
<rect x="1898.5" y="239.5" width="18" height="18" fill="#fff" stroke="#CFCFCF" stroke-width="1"/>
<path d="M1902.8 251l4.2-4.3l4.2 4.3z" fill="#666"/>
<rect x="1898.5" y="258.5" width="18" height="20" fill="#fff" stroke="#ABABAB" stroke-width="1"/>
</svg>
</body></html>
